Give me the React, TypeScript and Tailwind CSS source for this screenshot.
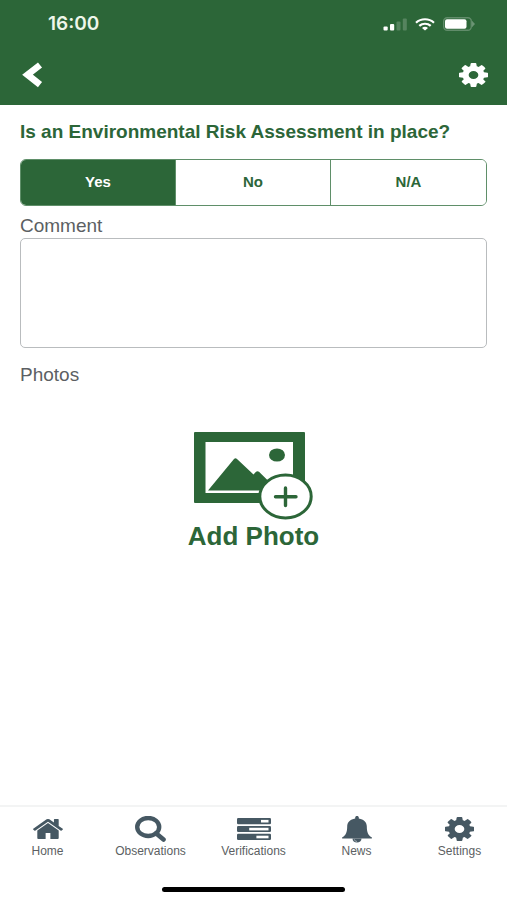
import React, { useState } from 'react';

const ANSWERS = ['Yes', 'No', 'N/A'];

const CogIcon: React.FC = () => (
  <svg viewBox="128 128 1536 1536" preserveAspectRatio="none" className="h-6 w-[29px]" fill="currentColor" aria-hidden="true">
    <path d="M1152 896q0-106-75-181t-181-75-181 75-75 181 75 181 181 75 181-75 75-181zm512-109v222q0 12-8 23t-20 13l-185 28q-19 54-39 91 35 50 107 138 10 12 10 25t-9 23q-27 37-99 108t-94 71q-12 0-26-9l-138-108q-44 23-91 38-16 136-29 186-7 28-36 28h-222q-14 0-24.500-8.500t-11.500-21.500l-28-184q-49-16-90-37l-141 107q-10 9-25 9-14 0-25-11-126-114-165-168-7-10-7-23 0-12 8-23 15-21 51-66.500t54-70.500q-27-50-41-99l-183-27q-13-2-21-12.500t-8-23.500v-222q0-12 8-23t19-13l186-28q14-46 39-92-40-57-107-138-10-12-10-24 0-10 9-23 26-36 98.500-107.500t94.500-71.500q13 0 26 10l138 107q44-23 91-38 16-136 29-186 7-28 36-28h222q14 0 24.500 8.500t11.500 21.500l28 184q49 16 90 37l142-107q9-9 24-9 13 0 25 10 129 119 165 170 7 8 7 22 0 12-8 23-15 21-51 66.500t-54 70.500q26 50 41 98l183 28q13 2 21 12.500t8 23.500z" />
  </svg>
);

const HomeIcon: React.FC = () => (
  <svg viewBox="88 256 1616 1280" preserveAspectRatio="none" className="h-5 w-[30px]" fill="currentColor" aria-hidden="true">
    <path d="M1472 992v480q0 26-19 45t-45 19h-384v-384h-256v384h-384q-26 0-45-19t-19-45v-480q0-1 .5-3t.5-3l575-474 575 474q1 2 1 6zm223-69l-62 74q-8 9-21 11h-3q-13 0-21-7l-692-577-692 577q-12 8-24 7-13-2-21-11l-62-74q-8-10-7-23.500t11-21.500l719-599q32-26 76-26t76 26l244 204v-195q0-14 9-23t23-9h192q14 0 23 9t9 23v408l219 182q10 8 11 21.500t-7 23.500z" />
  </svg>
);

const SearchIcon: React.FC = () => (
  <svg viewBox="0 0 31 26" className="h-[26px] w-[31px]" fill="none" stroke="currentColor" aria-hidden="true">
    <ellipse cx="13.200" cy="11" rx="11" ry="9" strokeWidth="4.400" />
    <path d="M21 17.200l7.500 6.300" strokeWidth="4.600" strokeLinecap="round" />
  </svg>
);

const TasksIcon: React.FC = () => (
  <svg viewBox="0 0 34 22" className="h-[22px] w-[34px]" aria-hidden="true">
    <g fill="currentColor">
      <rect width="34" height="6.200" rx="1.300" />
      <rect y="7.900" width="34" height="6.200" rx="1.300" />
      <rect y="15.800" width="34" height="6.200" rx="1.300" />
    </g>
    <g fill="#ffffff">
      <rect x="24" y="1.900" width="7.500" height="2.600" />
      <rect x="12.200" y="9.800" width="19.300" height="2.600" />
      <rect x="19.400" y="17.700" width="12.100" height="2.600" />
    </g>
  </svg>
);

const BellIcon: React.FC = () => (
  <svg viewBox="0 0 30 28" className="h-7 w-[30px]" fill="currentColor" aria-hidden="true">
    <path d="M15 1c1.100 0 1.800.6 1.800 1.500v.9c5 .8 8 3.900 8 7.800 0 6 1.300 8.800 4.700 11 .9.600.5 1.300-.5 1.300H1c-1 0-1.400-.7-.5-1.300 3.400-2.200 4.700-5 4.700-11 0-3.900 3-7 8-7.800v-.9C13.200 1.600 13.900 1 15 1z" />
    <path d="M10.500 23.400h9c0 2.300-1.900 4.200-4.500 4.200s-4.500-1.900-4.500-4.200z" />
    <path d="M12.300 24.300c.2 1.300 1.200 2.100 2.700 2.100" fill="none" stroke="#ffffff" strokeWidth=".5" />
  </svg>
);

const AddPhotoIcon: React.FC = () => (
  <svg viewBox="0 0 119 88" className="h-[88px] w-[119px]" aria-hidden="true">
    <path fill="currentColor" fillRule="evenodd" d="M1 0h109q1 0 1 1v69q0 1-1 1H1q-1 0-1-1V1q0-1 1-1zM11.500 10v51H99V10z" />
    <ellipse cx="83" cy="23" rx="8" ry="6.600" fill="currentColor" />
    <path fill="currentColor" d="M14 58.500l26-31.500q1.500-1.500 3 0l16.500 15.500 2.500-2.700q1.500-1.300 3 0L84 58.500z" />
    <ellipse cx="91.500" cy="64.500" rx="25.700" ry="21.400" fill="#ffffff" stroke="currentColor" strokeWidth="3" />
    <path d="M91.500 56v17.500M81.500 64.700h20.500" fill="none" stroke="currentColor" strokeWidth="3.400" strokeLinecap="round" />
  </svg>
);

const StatusIcons: React.FC = () => (
  <div className="flex items-center gap-2" aria-hidden="true">
    <svg viewBox="0 0 24 13" className="h-[13px] w-6" fill="#ffffff">
      <rect x=".5" y="8.500" width="4.200" height="4" rx="1" />
      <rect x="7" y="6" width="4.200" height="6.500" rx="1" />
      <rect x="13.500" y="3.500" width="4" height="9" rx="1" opacity=".2" />
      <rect x="19.800" y=".5" width="4" height="12" rx="1" opacity=".2" />
    </svg>
    <svg viewBox="0 0 20 13" className="h-[13px] w-5" fill="none" stroke="#ffffff" strokeWidth="2.200">
      <path d="M1 4.700C6 .1 14 .1 19 4.700" />
      <path d="M4.300 7.900c3.200-2.900 8.200-2.900 11.400 0" />
      <path d="M10 12.500l-3-2.600c1.700-1.400 4.300-1.400 6 0z" fill="#ffffff" stroke="none" />
    </svg>
    <svg viewBox="0 0 32 14" className="h-3.5 w-8">
      <rect x=".7" y=".7" width="27.600" height="12.600" rx="3.500" fill="none" stroke="#ffffff" strokeOpacity=".25" strokeWidth="1.400" />
      <path d="M29 3.800L32 7l-3 3.200z" fill="#ffffff" opacity=".3" />
      <rect x="2" y="2.300" width="21.500" height="9.400" rx="2" fill="#ffffff" />
    </svg>
  </div>
);

const NAV_ITEMS = [
  { label: 'Home', icon: <HomeIcon /> },
  { label: 'Observations', icon: <SearchIcon /> },
  { label: 'Verifications', icon: <TasksIcon /> },
  { label: 'News', icon: <BellIcon /> },
  { label: 'Settings', icon: <CogIcon /> },
];

const App: React.FC = () => {
  const [answer, setAnswer] = useState('Yes');
  const [comment, setComment] = useState('');

  return (
    <div className="flex min-h-screen flex-col bg-white font-['Liberation_Sans',Arial,sans-serif] text-[#5c5f63]">
      {/* Header */}
      <header className="bg-[#2c6638] text-white">
        <div className="flex h-12 items-center justify-between pr-8 pl-12">
          <span className="font-[Inter,sans-serif] text-[19px] leading-6 font-semibold text-[#eef6ea]">16:00</span>
          <StatusIcons />
        </div>
        <div className="flex h-[57px] items-center justify-between pr-[19px] pb-1 pl-[22px]">
          <button type="button" aria-label="Back">
            <svg viewBox="0 0 21 26" className="h-[26px] w-[21px]" fill="none" stroke="currentColor" strokeWidth="6.600" aria-hidden="true">
              <path d="M18 3L5.500 12.700 18 22.600" strokeLinejoin="miter" />
            </svg>
          </button>
          <button type="button" aria-label="Settings">
            <CogIcon />
          </button>
        </div>
      </header>

      {/* Question */}
      <main className="flex-1 px-5 pt-[15px]">
        <h1 className="text-[19px] leading-6 font-bold text-[#2c6638]">
          Is an Environmental Risk Assessment in place?
        </h1>
        <div className="mt-[15px] grid h-[47px] grid-cols-3 divide-x divide-[#5f8f69] overflow-hidden rounded-md border border-[#5f8f69]">
          {ANSWERS.map((item) => (
            <button
              key={item}
              type="button"
              aria-pressed={answer === item}
              onClick={() => setAnswer(item)}
              className={`text-[15px] font-bold ${answer === item ? 'bg-[#2c6638] text-white' : 'bg-white text-[#2c6638]'}`}
            >
              {item}
            </button>
          ))}
        </div>

        <label htmlFor="comment" className="mt-2 block text-[19px] leading-6">
          Comment
        </label>
        <textarea
          id="comment"
          value={comment}
          onChange={(e) => setComment(e.target.value)}
          className="block h-[110px] w-full resize-none rounded-[5px] border border-[#b9bcbe] p-2"
        />

        <h2 className="mt-[15px] text-[19px] leading-6">Photos</h2>
        <button type="button" className="mx-auto mt-[45px] flex flex-col items-center text-[#2c6638]">
          <AddPhotoIcon />
          <span className="text-[26px] leading-8 font-bold">Add Photo</span>
        </button>
      </main>

      {/* Bottom navigation */}
      <footer className="border-t-2 border-[#f3f4f4] pt-2">
        <nav className="grid grid-cols-5 gap-2">
          {NAV_ITEMS.map(({ label, icon }) => (
            <a key={label} href="#" className="flex flex-col items-center">
              <span className="flex h-7 items-center text-[#465863]">{icon}</span>
              <span className="text-xs leading-4">{label}</span>
            </a>
          ))}
        </nav>
        <div className="mx-auto mt-7 mb-2 h-[5px] w-[36%] rounded-full bg-black" />
      </footer>
    </div>
  );
};

export default App;
